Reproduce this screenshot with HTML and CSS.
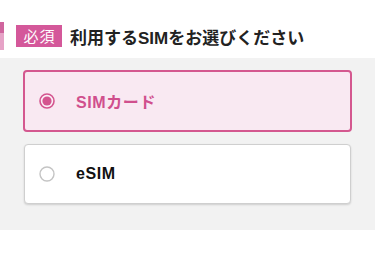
FILE: index.html
```html
<!DOCTYPE html>
<html lang="ja">
<head>
<meta charset="utf-8">
<link rel="stylesheet" href="styles.css">
</head>
<body>
<div class="head">
  <span class="edge"></span>
  <span class="badge">必須</span>
  <h2 class="title">利用するSIMをお選びください</h2>
</div>
<div class="panel">
  <label class="opt opt-on">
    <svg class="radio" width="16" height="16" viewBox="0 0 16 16"><circle cx="8" cy="8" r="7" fill="#fbeff6" stroke="#d4558f" stroke-width="1.6"/><circle cx="8" cy="8" r="4.6" fill="#d4558f"/></svg>
    <span class="lbl">SIMカード</span>
  </label>
  <label class="opt opt-off">
    <svg class="radio" width="16" height="16" viewBox="0 0 16 16"><circle cx="8" cy="8" r="7" fill="#fff" stroke="#c4c4c4" stroke-width="1.4"/></svg>
    <span class="lbl">eSIM</span>
  </label>
</div>
</body>
</html>
```

FILE: styles.css
```css
html, body {
  margin: 0;
  padding: 0;
  background: #fff;
  font-family: "Liberation Sans", "Noto Sans CJK JP", sans-serif;
}
.head {
  height: 58px;
  display: flex;
  align-items: center;
  position: relative;
  padding-left: 16px;
  box-sizing: border-box;
  padding-top: 14px;
}
.edge {
  position: absolute;
  left: 0;
  top: 22px;
  width: 4px;
  height: 28px;
  background: linear-gradient(#d0659e 0, #d0659e 11px, #e6a3c7 11px);
}
.badge {
  width: 46px;
  height: 22px;
  background: #d4589a;
  color: #fff;
  font-family: "Noto Sans CJK JP", sans-serif;
  font-size: 15px;
  line-height: 22px;
  text-align: center;
  letter-spacing: 1px;
  box-sizing: border-box;
  padding-left: 1px;
}
.title {
  margin: 0 0 0 8px;
  font-size: 17px;
  font-weight: bold;
  color: #222;
  font-family: "Liberation Sans", "Noto Sans CJK JP", sans-serif;
}
.panel {
  background: #f2f2f2;
  padding: 12px 24px 26px;
  display: flex;
  flex-direction: column;
  gap: 12px;
}
.opt {
  display: flex;
  align-items: center;
  box-sizing: border-box;
  border-radius: 4px;
  font-size: 16px;
  font-weight: bold;
}
.opt-on {
  height: 62px;
  margin: 0 -1px;
  border: 2px solid #d4588f;
  background: #f9e9f2;
  color: #d04f8d;
  padding-left: 14px;
}
.opt-off {
  height: 60px;
  border: 1px solid #cfcfcf;
  background: #fff;
  color: #111;
  padding-left: 14px;
  box-shadow: 0 1px 2px rgba(0,0,0,0.15);
}
.radio {
  flex: none;
}
.lbl {
  margin-left: 21px;
  letter-spacing: 0.6px;
}
```
